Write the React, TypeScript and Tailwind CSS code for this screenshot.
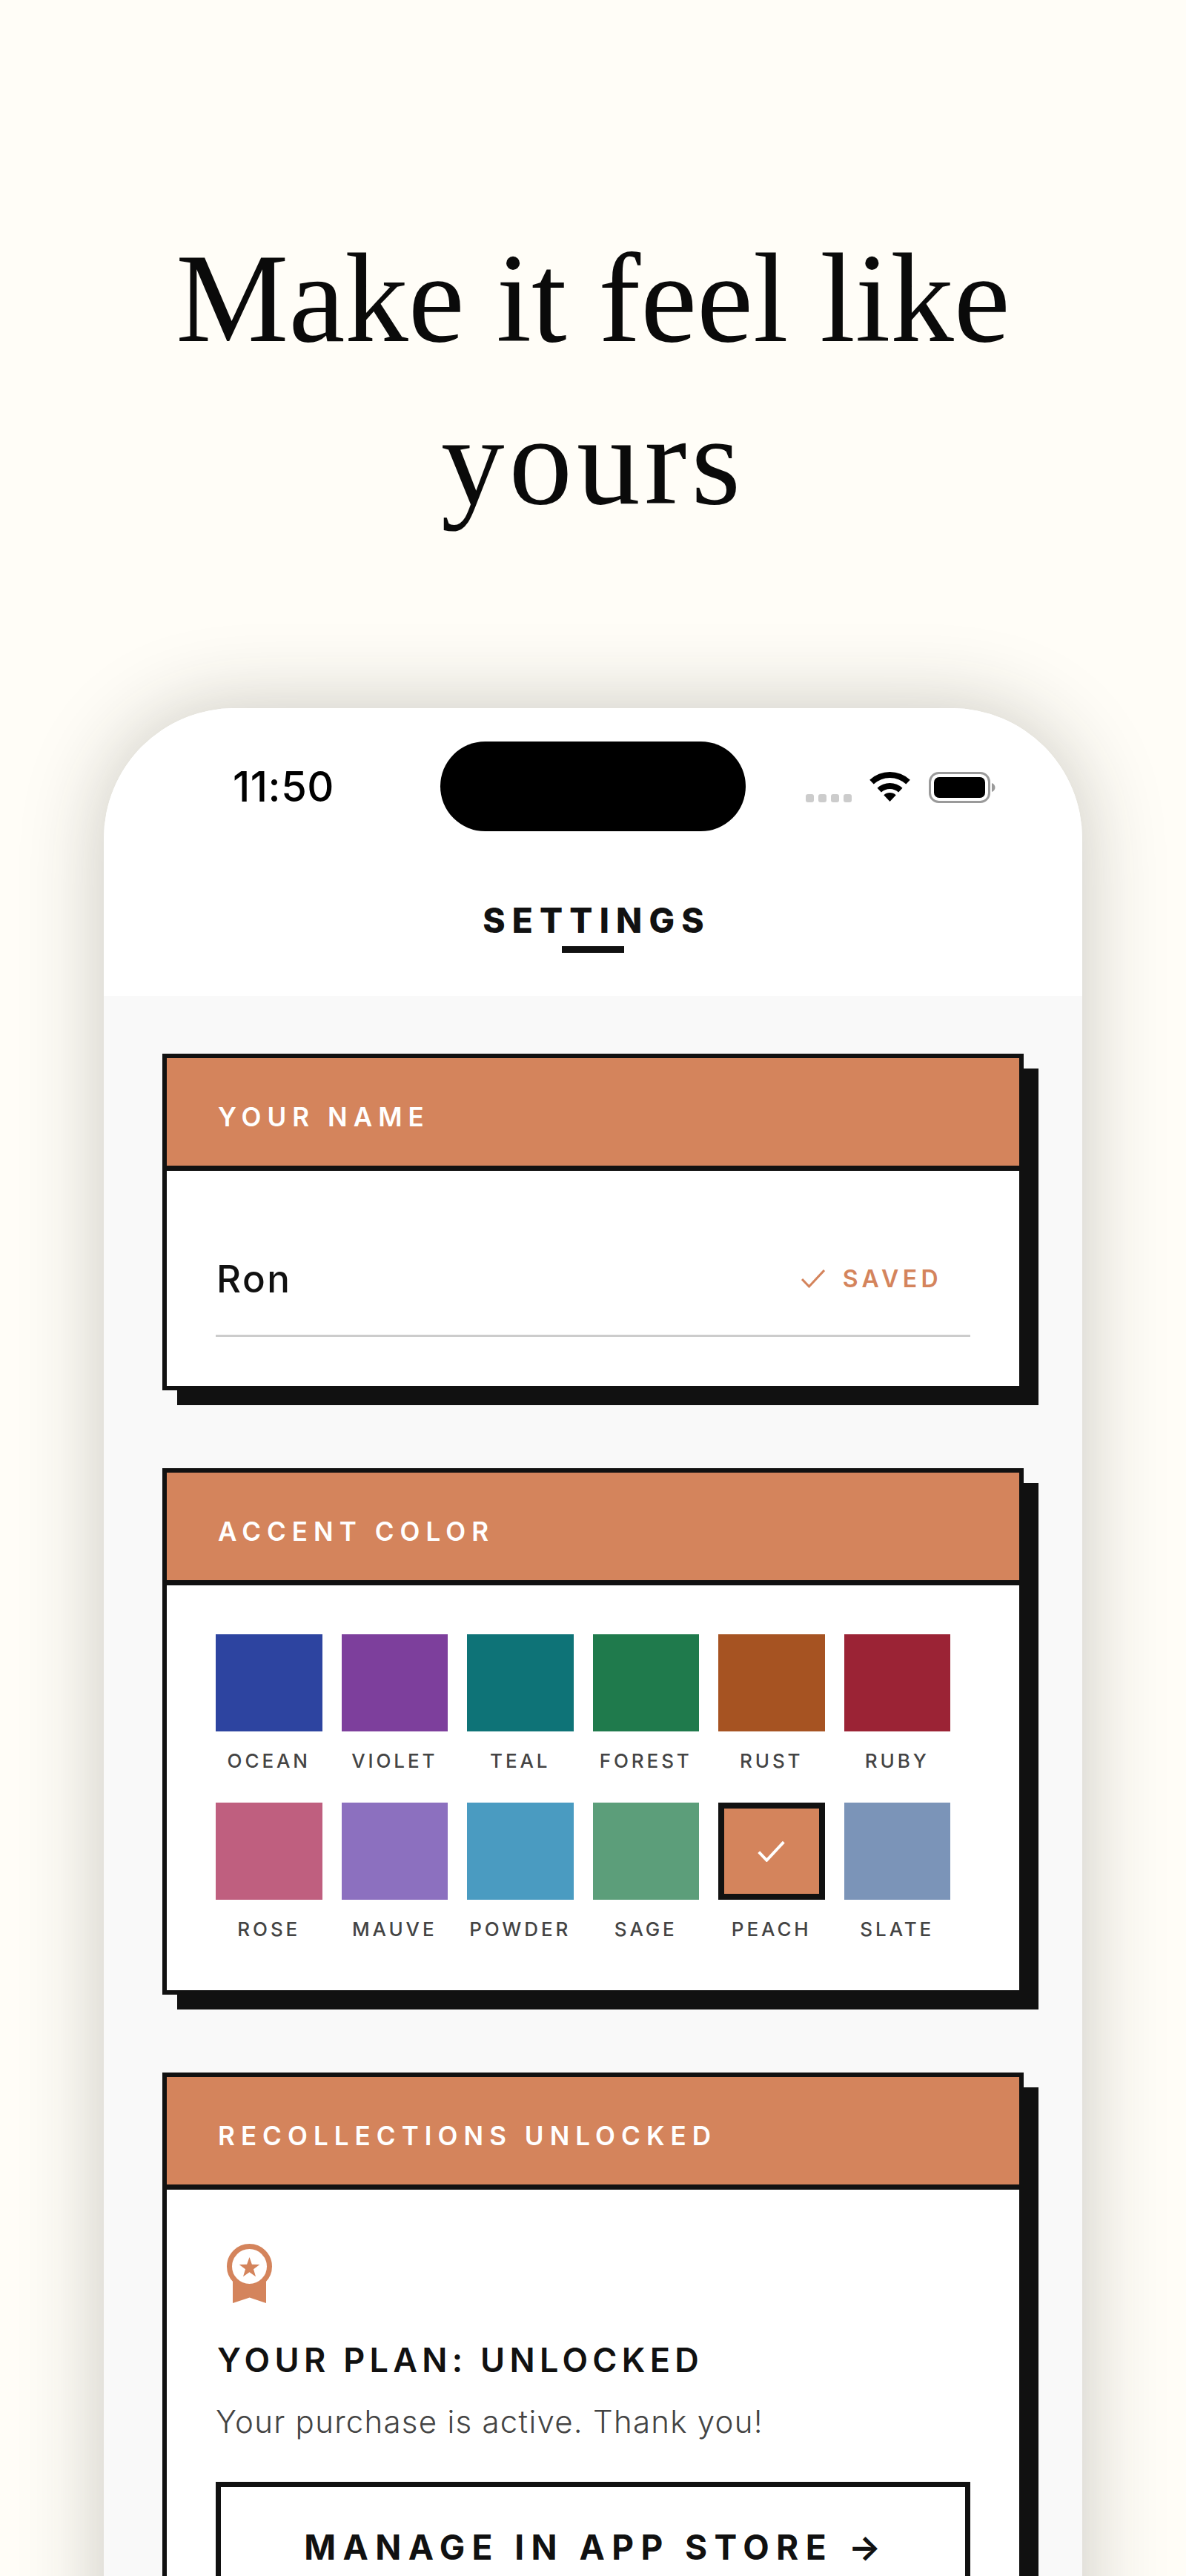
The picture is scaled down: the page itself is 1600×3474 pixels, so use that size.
import type { ReactNode } from 'react'

const SWATCHES = [
  { name: 'OCEAN', color: 'bg-[#2d44a0]' },
  { name: 'VIOLET', color: 'bg-[#7d3f9c]' },
  { name: 'TEAL', color: 'bg-[#0e7377]' },
  { name: 'FOREST', color: 'bg-[#1f7a4c]' },
  { name: 'RUST', color: 'bg-[#a65322]' },
  { name: 'RUBY', color: 'bg-[#9b2335]' },
  { name: 'ROSE', color: 'bg-[#bf5f7f]' },
  { name: 'MAUVE', color: 'bg-[#8c70bf]' },
  { name: 'POWDER', color: 'bg-[#4a9bc1]' },
  { name: 'SAGE', color: 'bg-[#5c9e7a]' },
  { name: 'PEACH', color: 'bg-[#d4845c]', selected: true },
  { name: 'SLATE', color: 'bg-[#7b94b8]' },
]

function Card({ title, children }: { title: string; children: ReactNode }) {
  return (
    <section className="border-[6px] border-[#111] bg-white shadow-[20px_20px_0_#111]">
      <div className="flex h-[152px] items-center border-b-[7px] border-[#111] bg-[#d4845c] pl-[69px] pt-[14px]">
        <h2 className="text-[35px] font-semibold leading-none tracking-[0.23em] text-white">{title}</h2>
      </div>
      {children}
    </section>
  )
}

function StatusIcons() {
  return (
    <div className="flex items-start pl-[81px] pt-[41px]">
      <div className="mt-[30px] flex gap-[6px]">
        {[0, 1, 2, 3].map((i) => (
          <span key={i} className="size-[11px] rounded-[3px] bg-[#ccc]" />
        ))}
      </div>
      <svg className="ml-[24px]" width="55" height="41" viewBox="0 0 55 41" fill="#000">
        <path d="M0.2 10.8A40 40 0 0 1 54.8 10.8L49.3 16.6A32 32 0 0 0 5.7 16.6Z" />
        <path d="M10.5 21.7A25 25 0 0 1 44.5 21.7L39.1 27.6A17 17 0 0 0 15.9 27.6Z" />
        <path d="M19.3 31.2A12 12 0 0 1 35.7 31.2L27.5 40Z" />
      </svg>
      <svg className="ml-[25px]" width="90" height="42" viewBox="0 0 90 42">
        <rect x="1.5" y="1.5" width="80" height="39" rx="12" fill="none" stroke="#9a9a9a" strokeWidth="3" />
        <rect x="7" y="7" width="69" height="28" rx="7" fill="#000" />
        <path d="M85 15C88 16 89.500 18.500 89.500 21C89.500 23.500 88 26 85 27Z" fill="#9a9a9a" />
      </svg>
    </div>
  )
}

function CheckMark({ className, stroke, width }: { className?: string; stroke: string; width: number }) {
  return (
    <svg className={className} viewBox="0 0 32 25" fill="none" stroke={stroke} strokeWidth={width}>
      <path d="M1 13L10.500 23L31 1" />
    </svg>
  )
}

function Ribbon() {
  return (
    <svg width="61" height="80" viewBox="0 0 61 80" fill="#d4845c">
      <path d="M8 44H53V80L30.700 72.500L8 80Z" />
      <circle cx="30.500" cy="30.500" r="27" fill="#fff" stroke="#d4845c" strokeWidth="7" />
      <path d="M30.500 18L33.900 27.800L44.300 28L36 34.300L39 44.200L30.500 38.300L22 44.200L25 34.300L16.700 28L27.100 27.800Z" />
    </svg>
  )
}

export default function App() {
  return (
    <div className="h-[3474px] overflow-hidden bg-[#fffdf7] font-['Inter',sans-serif] text-[#111]">
      <h1 className="px-[100px] pt-[293px] text-center font-['Liberation_Serif',serif] text-[171px] font-normal leading-[219px] text-[#0a0a0a]">
        Make it feel like
        <br />
        <span className="tracking-[6px]">yours</span>
      </h1>

      <div className="mx-[140px] mt-[224px] rounded-t-[176px] bg-white shadow-[0_0_110px_rgba(40,40,30,0.25)]">
        <header className="h-[388px] rounded-t-[176px] bg-white">
          <div className="grid grid-cols-[454px_412px_1fr] pt-[45px]">
            <span className="pl-[174px] pt-[33px] text-[56px] font-medium leading-none tracking-[0.01em] text-black">
              11:50
            </span>
            <div className="h-[121px] rounded-full bg-black" />
            <StatusIcons />
          </div>
          <div className="mt-[97px] flex flex-col items-center">
            <div className="pl-[10px] text-[46px] font-extrabold leading-none tracking-[0.2em]">SETTINGS</div>
            <div className="mt-[12px] h-[9px] w-[84px] bg-[#111]" />
          </div>
        </header>

        <main className="flex flex-col gap-[105px] bg-[#f9f9f9] pb-[60px] pl-[79px] pr-[79px] pt-[78px]">
          <Card title="YOUR NAME">
            <div className="px-[66px] pb-[66px] pt-[120px]">
              <div className="flex items-center justify-between border-b-[3px] border-[#ccc] pb-[50px] pr-[38px]">
                <span className="pl-[1px] text-[51px] font-medium leading-none tracking-[0.05em]">Ron</span>
                <span className="flex items-center gap-[24px] text-[#d4845c]">
                  <CheckMark className="h-[25px] w-[32px]" stroke="#d4845c" width={3} />
                  <span className="text-[32px] font-semibold leading-none tracking-[0.17em]">SAVED</span>
                </span>
              </div>
            </div>
          </Card>

          <Card title="ACCENT COLOR">
            <div className="grid grid-cols-[repeat(6,143.500px)] gap-x-[26px] gap-y-[43px] pb-[69px] pl-[66px] pt-[66px]">
              {SWATCHES.map((s) => (
                <div key={s.name} className="flex flex-col items-center">
                  <div
                    className={`flex h-[131px] w-full items-center justify-center ${s.color} ${
                      s.selected ? 'border-[8px] border-[#111]' : ''
                    }`}
                  >
                    {s.selected && <CheckMark className="h-[28px] w-[37px]" stroke="#fff" width={3.500} />}
                  </div>
                  <span className="mt-[27px] text-[26px] font-medium leading-none tracking-[0.15em] text-[#444]">
                    {s.name}
                  </span>
                </div>
              ))}
            </div>
          </Card>

          <Card title="RECOLLECTIONS UNLOCKED">
            <div className="px-[66px] pt-[73px]">
              <div className="pl-[15px]">
                <Ribbon />
              </div>
              <div className="mt-[54px] pl-[2px] text-[45px] font-semibold leading-none tracking-[0.14em]">
                YOUR PLAN: UNLOCKED
              </div>
              <p className="mt-[40px] text-[42px] font-light leading-none tracking-[0.03em] text-[#444]">
                Your purchase is active. Thank you!
              </p>
              <button className="mt-[60px] h-[200px] w-full border-[7px] border-[#111] pb-[24px] pl-[8px] text-[46px] font-bold leading-none tracking-[0.205em]">
                MANAGE IN APP STORE →
              </button>
            </div>
          </Card>
        </main>
      </div>
    </div>
  )
}
